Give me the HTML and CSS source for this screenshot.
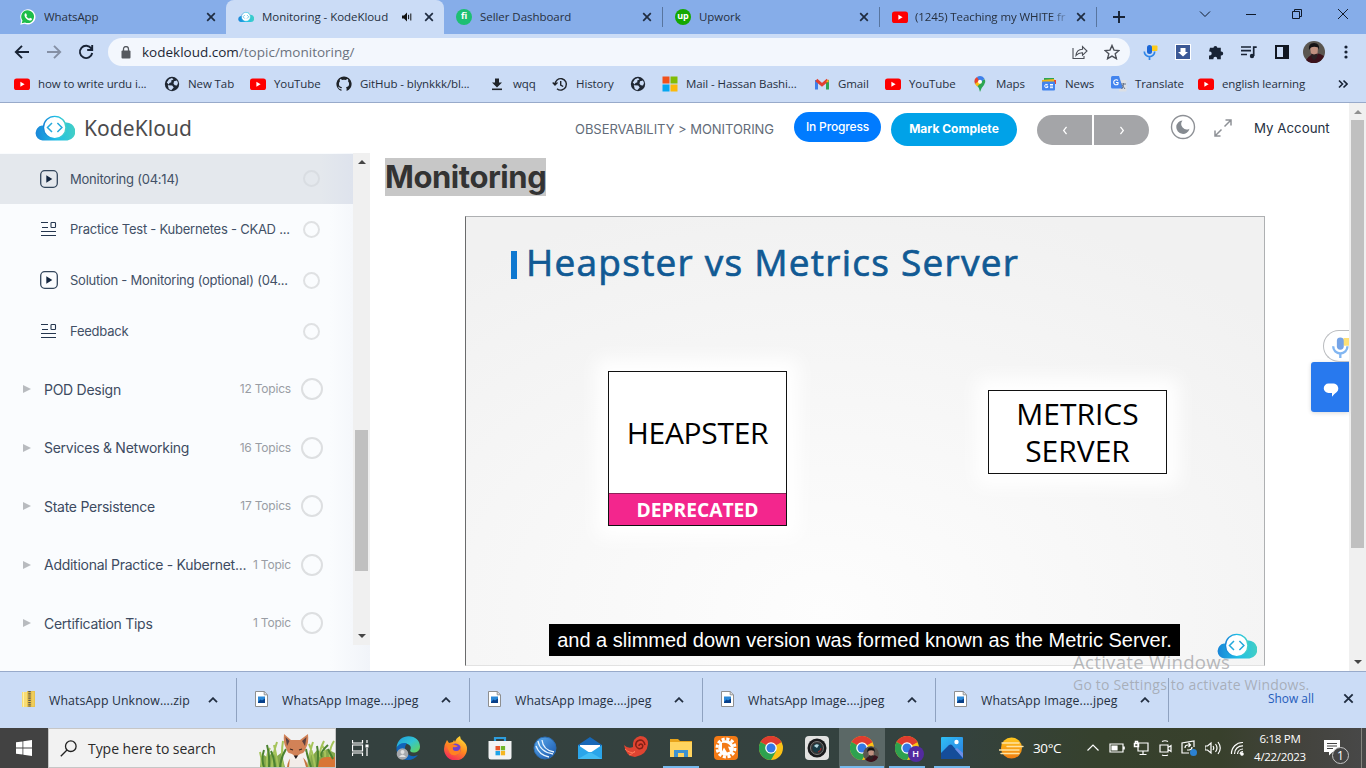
FILE: index.html
```html
<!DOCTYPE html>
<html lang="en">
<head>
<meta charset="utf-8">
<title>Monitoring - KodeKloud</title>
<link rel="stylesheet" href="styles.css">
</head>
<body>
<svg class="sprite" aria-hidden="true">
  <defs>
    <linearGradient id="cloudGrad" x1="0" y1="0" x2="1" y2="0"><stop offset="0" stop-color="#1a86d8"/><stop offset=".55" stop-color="#1fc0e6"/><stop offset="1" stop-color="#44cfc4"/></linearGradient>
    <linearGradient id="edgeGrad" x1="0" y1="0" x2="1" y2="1"><stop offset="0" stop-color="#1b9de2"/><stop offset=".5" stop-color="#33c4d0"/><stop offset="1" stop-color="#68d64b"/></linearGradient>
    <linearGradient id="foxGrad" x1=".8" y1="0" x2=".3" y2="1"><stop offset="0" stop-color="#ffe23a"/><stop offset=".5" stop-color="#ff8a1f"/><stop offset="1" stop-color="#f4265c"/></linearGradient>
    <linearGradient id="blueBall" x1="0" y1="0" x2="1" y2="1"><stop offset="0" stop-color="#5fb0f2"/><stop offset="1" stop-color="#1652a8"/></linearGradient>
    <linearGradient id="photoGrad" x1="0" y1="0" x2="1" y2="1"><stop offset="0" stop-color="#2fc0f5"/><stop offset="1" stop-color="#2a7be0"/></linearGradient>
    <linearGradient id="sunGrad" x1="0" y1="0" x2="0" y2="1"><stop offset="0" stop-color="#ffc81e"/><stop offset="1" stop-color="#f07d12"/></linearGradient>
  </defs>
  <symbol id="close" viewBox="0 0 10 10"><path d="M1.200 1.200l7.600 7.600M8.800 1.200L1.200 8.800" fill="none" stroke="#1f2c40" stroke-width="1.700"/></symbol>
  <symbol id="youtube" viewBox="0 0 16 16"><rect y="2.500" width="16" height="11.500" rx="2.600" fill="#fe0000"/><path d="M6.400 5.800v5l4.200-2.500z" fill="#fff"/></symbol>
  <symbol id="globe" viewBox="0 0 16 16"><circle cx="8" cy="8" r="7.200" fill="#1f2733"/><path d="M2.800 6.500L5 3.200l3-1.300 1.500 1.500-2.300 1.200.2 1.700-2 .6-.6 1.600zM10 5.300l3-.9 1 2.600-1 2.600-2.200-.4-1.300-1.500zM3.800 9.200l4.400.2 1.500 2-2.500 2.900-2.400-1.400z" fill="#cbdcf6"/></symbol>
  <symbol id="kcloud" viewBox="0 0 40 26"><path d="M7.500 25.500A7.500 7.500 0 0 1 7 10.600l3 .2A10.500 10.500 0 0 1 30 7.500a9 9 0 0 1 2.500 18z" fill="url(#cloudGrad)"/><circle cx="19.700" cy="12.500" r="11.200" fill="#fff" stroke="url(#cloudGrad)" stroke-width="1.300"/><path d="M17 8l-4.500 4.500L17 17M22.400 8l4.500 4.500-4.500 4.500" fill="none" stroke="#24a9dc" stroke-width="1.500"/></symbol>
  <symbol id="mic" viewBox="0 0 16 16"><rect x="9.500" y="1.500" width="6" height="5.500" rx="1" fill="#fdcb1c"/><rect x="5" y="1" width="5" height="9" rx="2.500" fill="#1a66d6"/><path d="M2.300 7.500a5.200 5.200 0 0 0 10.400 0M7.500 12.700V16" fill="none" stroke="#2f86e8" stroke-width="1.700"/></symbol>
  <symbol id="avatar" viewBox="0 0 22 22"><circle cx="11" cy="11" r="11" fill="#5a5650"/><path d="M3 19q8-11 18-4a11 11 0 0 1-18 4z" fill="#3c121c"/><path d="M7 6q4-3 8 0l-.5 7-3.300 4L8 13z" fill="#c09180"/><path d="M6 9Q5 2 11 2t5 7l-1-2.500q-4-1.500-7 0z" fill="#151315"/><path d="M8 12.500l3 1 3.500-1-.5 4-3 3-2.500-3z" fill="#2b2224"/></symbol>
  <symbol id="file-img" viewBox="0 0 13 16"><path d="M.5.500h8.700l3.300 3.300v11.700H.500z" fill="#fff" stroke="#8e8f90"/><path d="M9.200.500v3.300h3.300" fill="none" stroke="#8e8f90"/><rect x="3" y="5.500" width="7" height="6.500" fill="#2a88d8"/><path d="M3 11l2.500-2.500 1.500 1 3-2V12H3z" fill="#093f88"/></symbol>
  <symbol id="caret" viewBox="0 0 10 6"><path d="M1 5.200l4-4 4 4" fill="none" stroke="#222e40" stroke-width="1.800"/></symbol>
  <symbol id="play" viewBox="0 0 18 18"><rect x=".7" y=".7" width="16.600" height="16.600" rx="4" fill="none" stroke="#33465c" stroke-width="1.300"/><path d="M6.300 5.200v7.600l6-3.800z" fill="#13263f"/></symbol>
  <symbol id="quiz" viewBox="0 0 16 16"><path d="M0 1.500h7M1 6.500h6M0 10.500h15M0 14.500h15" stroke="#24364e" stroke-width="1.100"/><rect x="10" y="1.500" width="4.500" height="5" rx=".8" fill="none" stroke="#24364e" stroke-width="1.100"/></symbol>
  <symbol id="chrome" viewBox="0 0 24 24"><circle cx="12" cy="12" r="12" fill="#fbc116"/><path d="M12 12L1.600 6A12 12 0 0 1 22.400 6z" fill="#df3c2f"/><path d="M12 12L1.600 6A12 12 0 0 0 12 24l5.200-9z" fill="#2ea14f"/><path d="M12 6h10.400L12 12z" fill="#df3c2f"/><circle cx="12" cy="12" r="5.800" fill="#fff"/><circle cx="12" cy="12" r="4.500" fill="#3478e5"/></symbol>
</svg>

<div class="tabs">
  <div class="tab tab-first"><svg class="fav" viewBox="0 0 16 16"><path d="M.3 15.700l1-4A7.600 7.600 0 1 1 4.500 14.700z" fill="#fff"/><path d="M1.700 14.300l.8-2.800A6.400 6.400 0 1 1 5 13.500z" fill="#1ebd49"/><path d="M5 4.600l1-.3 1 2-.7 1q1 1.700 2.800 2.400l.9-1 2 1-.3 1.200q-1 1-2.300.6Q5.300 10 4.500 6.500q0-1.200.5-1.900z" fill="#fff"/></svg><span class="label">WhatsApp</span><svg class="x"><use href="#close"/></svg></div>
  <div class="tab active"><svg class="fav"><use href="#kcloud"/></svg><span class="label">Monitoring - KodeKloud</span><svg class="audio" viewBox="0 0 10 10"><path d="M0 3.500h2L5 .5v9l-3-3H0z" fill="#111"/><path d="M6.600 2.800v4.400M8.800 1.500v7" stroke="#111" stroke-width="1"/></svg><svg class="x"><use href="#close"/></svg></div>
  <div class="tab sep"><span class="fav badge fiverr">fi</span><span class="label">Seller Dashboard</span><svg class="x"><use href="#close"/></svg></div>
  <div class="tab sep"><span class="fav badge upwork">up</span><span class="label">Upwork</span><svg class="x"><use href="#close"/></svg></div>
  <div class="tab sep"><svg class="fav"><use href="#youtube"/></svg><span class="label fade">(1245) Teaching my WHITE fr</span><svg class="x"><use href="#close"/></svg></div>
  <svg class="plus" viewBox="0 0 12 12"><path d="M6 0v12M0 6h12" stroke="#182335" stroke-width="1.900"/></svg>
  <div class="winctl">
    <svg viewBox="0 0 12 12"><path d="M1 3.500l5 5 5-5" /></svg>
    <svg viewBox="0 0 12 12"><path d="M1 6.500h10"/></svg>
    <svg viewBox="0 0 12 12"><path d="M1.500 3.500h7v7h-7zM3.500 3.500v-2h7v7h-2"/></svg>
    <svg viewBox="0 0 12 12"><path d="M1 1l10 10M11 1L1 11"/></svg>
  </div>
</div>

<div class="toolbar">
  <svg class="nav" viewBox="0 0 16 16"><path d="M15 8H2M8 1.800L1.800 8 8 14.200" stroke="#182335"/></svg>
  <svg class="nav" viewBox="0 0 16 16"><path d="M1 8h13M8 1.800L14.200 8 8 14.200" stroke="#8590a5"/></svg>
  <svg class="nav" viewBox="0 0 16 16"><path d="M13.300 4.500A6.200 6.200 0 1 0 14.200 9M14.200 1v5h-5" stroke="#182335"/></svg>
  <div class="omnibox">
    <svg class="lock" viewBox="0 0 10 13"><rect x=".5" y="4.500" width="9" height="8" rx="1" fill="#55595f"/><path d="M2.500 5V3a2.500 2.500 0 0 1 5 0v2" fill="none" stroke="#55595f" stroke-width="1.300"/></svg>
    <span class="url">kodekloud.com<i>/topic/monitoring/</i></span>
    <svg class="oi" viewBox="0 0 16 16"><path d="M1 4v10.500h11V12M4 11.500q.5-6 6.500-6.300V2.500L15 7l-4.500 4.300V8.700Q6.500 8.500 4 11.500z" fill="none" stroke="#4c5058" stroke-width="1.100"/></svg>
    <svg class="oi" viewBox="0 0 16 16"><path d="M8 1.500l2 4.600 5 .4-3.800 3.300 1.200 4.900L8 12.100l-4.400 2.600 1.200-4.900L1 6.500l5-.4z" fill="none" stroke="#4c5058" stroke-width="1.400"/></svg>
  </div>
  <div class="exts">
    <svg><use href="#mic"/></svg>
    <svg viewBox="0 0 16 16"><rect x=".5" y=".5" width="15" height="15" fill="#3b5895" stroke="#fff"/><path d="M5.500 4h5v4H13l-5 4.500L3 8h2.500z" fill="#fff"/></svg>
    <svg viewBox="0 0 16 16"><path d="M2 3.800h3.500a1.900 1.900 0 1 1 3.800 0h3.500v3.800h.5a1.900 1.900 0 0 1 0 3.800h-.5v3.800H9.200v-.5a1.900 1.900 0 0 0-3.800 0v.5H1v-3.800h.8a1.900 1.900 0 0 0 0-3.800H1z" fill="#182335"/></svg>
    <svg viewBox="0 0 16 16"><path d="M0 3h10M0 6.700h10M0 10.500h6M12.700 12V3.200h3" fill="none" stroke="#182335" stroke-width="1.700"/><circle cx="11" cy="12" r="2.200" fill="#182335"/></svg>
    <svg viewBox="0 0 16 16"><path d="M2 2h12v12H2z" fill="none" stroke="#111722" stroke-width="2"/><path d="M9 2h5v12H9z" fill="#111722"/></svg>
    <svg class="me"><use href="#avatar"/></svg>
    <svg viewBox="0 0 16 16"><g fill="#182335"><circle cx="8" cy="3" r="1.600"/><circle cx="8" cy="8" r="1.600"/><circle cx="8" cy="13" r="1.600"/></g></svg>
  </div>
</div>

<div class="bookmarks">
  <span><svg><use href="#youtube"/></svg>how to write urdu i...</span>
  <span><svg><use href="#globe"/></svg>New Tab</span>
  <span><svg><use href="#youtube"/></svg>YouTube</span>
  <span><svg viewBox="0 0 16 16"><path d="M8 .6a7.400 7.400 0 0 0-2.600 14.400v-1.800q-2 .3-2.800-1.500l-.8-.9q1.200-.2 2 1 .6.700 1.700.4l.5-1Q2.900 10.800 2.900 8q0-1.700 1-2.600-.3-1.200.2-2.300 1 0 2.200.9 1.700-.4 3.400 0 1.200-.9 2.200-.9.500 1.100.2 2.300 1 .9 1 2.600 0 2.800-3.100 3.200.6.700.6 1.600V15A7.400 7.400 0 0 0 8 .6z" fill="#1f2328"/></svg>GitHub - blynkkk/bl...</span>
  <span><svg viewBox="0 0 16 16"><path d="M6 2.500h4v4h3l-5 5-5-5h3z" fill="#20242a"/><path d="M3 13.300h10" stroke="#20242a" stroke-width="1.600"/></svg>wqq</span>
  <span><svg viewBox="0 0 16 16"><path d="M3 8.500a5.700 5.700 0 1 1 2 4.200M.7 6.500L3 9l2.500-2.500M8.700 5v4l2.500 1.500" fill="none" stroke="#20242a" stroke-width="1.400"/></svg>History</span>
  <span><svg><use href="#globe"/></svg></span>
  <span><svg viewBox="0 0 16 16"><path d="M.5.500h7v7h-7z" fill="#f1511b"/><path d="M8.500.500h7v7h-7z" fill="#80bc06"/><path d="M.5 8.500h7v7h-7z" fill="#05a6f0"/><path d="M8.500 8.500h7v7h-7z" fill="#fbb90a"/></svg>Mail - Hassan Bashi...</span>
  <span><svg viewBox="0 0 16 16"><path d="M2.500 13.500V4" stroke="#3f7fe8" stroke-width="3"/><path d="M13.500 13.500V4" stroke="#2fa551" stroke-width="3"/><path d="M2.300 4L8 8.800 13.700 4" fill="none" stroke="#e2402f" stroke-width="3"/><path d="M12 5.400l2.500-2.200v3.300z" fill="#f8bb15"/></svg>Gmail</span>
  <span><svg><use href="#youtube"/></svg>YouTube</span>
  <span><svg viewBox="0 0 16 16"><path d="M8 16Q7 11 4 8.600 2 6 3 3.500h10q1 2.500-1 5.500Q9 12 8 16z" fill="#2ca552"/><path d="M3 8Q1.300 3 5 1l4 3z" fill="#e8422f"/><path d="M5 1q4-2.500 7.500 1.500L8.500 7z" fill="#3e80ea"/><path d="M3 8l3.500-3 2.500 2-3.800 3.500z" fill="#fbbc14"/><circle cx="8" cy="5.700" r="2" fill="#fff"/></svg>Maps</span>
  <span><svg viewBox="0 0 16 16"><path d="M3 2h10v5H3z" fill="#2da552"/><path d="M1 4l12-1 2 4H1z" fill="#f3b51a"/><path d="M13 4h2v4h-2z" fill="#e44735"/><rect x="1" y="5.500" width="13" height="9" rx="1" fill="#4384ee"/><path d="M6.700 8.500q-3-1-3 1.500t3 1.500V10H5.300M9 8.500h3M9 10h3M9 11.700h3" fill="none" stroke="#fff"/></svg>News</span>
  <span><svg viewBox="0 0 16 16"><path d="M7 4h7.500q1 0 1 1v9.500q0 1-1 1H8z" fill="#dcdfe4"/><path d="M1.500 0H8l4 12.500H1.500Q0 12.500 0 11V1.500Q0 0 1.500 0z" fill="#4384ee"/><path d="M7 4.500A2.500 2.500 0 1 0 7 8V6.500H5" fill="none" stroke="#fff" stroke-width="1.100"/><path d="M10 8h5M12.500 7v1q0 3-2 5M11 9l3 4" fill="none" stroke="#65758c"/></svg>Translate</span>
  <span><svg><use href="#youtube"/></svg>english learning</span>
  <svg class="more" viewBox="0 0 10 10"><path d="M1 1.500L4.500 5 1 8.500M5.500 1.500L9 5 5.500 8.500" fill="none" stroke="#182335" stroke-width="1.600"/></svg>
</div>

<div class="page">
  <div class="site">
    <header class="head">
      <svg class="logo"><use href="#kcloud"/></svg><span class="brand">KodeKloud</span>
      <span class="crumb">OBSERVABILITY &gt; MONITORING</span>
      <span class="pill progress">In Progress</span>
      <span class="pill complete">Mark Complete</span>
      <span class="pager left"><svg viewBox="0 0 6 10"><path d="M4.700 1L1.500 5l3.200 4"/></svg></span>
      <span class="pager right"><svg viewBox="0 0 6 10"><path d="M1.300 1l3.200 4-3.200 4"/></svg></span>
      <svg class="moon" viewBox="0 0 26 26"><circle cx="13" cy="13" r="11.500" fill="none" stroke="#8e9196" stroke-width="1.400"/><path d="M12.500 6.500a6.700 6.700 0 1 0 7 8.200 5.500 5.500 0 0 1-7-8.200z" fill="#858a90"/></svg>
      <svg class="expand" viewBox="0 0 18 18"><path d="M11.500 1H17v5.500M17 1l-6.500 6.500M6.500 17H1v-5.500M1 17l6.500-6.500" fill="none" stroke="#8e9196" stroke-width="1.500"/></svg>
      <span class="account">My Account</span>
    </header>
    <div class="body">
      <aside class="side">
        <div class="list">
          <div class="topic current"><svg><use href="#play"/></svg><span>Monitoring (04:14)</span><b></b></div>
          <div class="topic"><svg class="q"><use href="#quiz"/></svg><span>Practice Test - Kubernetes - CKAD ...</span><b></b></div>
          <div class="topic"><svg><use href="#play"/></svg><span>Solution - Monitoring (optional) (04...</span><b></b></div>
          <div class="topic"><svg class="q"><use href="#quiz"/></svg><span>Feedback</span><b></b></div>
          <div class="lessons">
            <div class="lesson"><i></i><span>POD Design</span><em>12 Topics</em><b></b></div>
            <div class="lesson"><i></i><span>Services &amp; Networking</span><em>16 Topics</em><b></b></div>
            <div class="lesson"><i></i><span>State Persistence</span><em>17 Topics</em><b></b></div>
            <div class="lesson"><i></i><span>Additional Practice - Kubernet...</span><em>1 Topic</em><b></b></div>
            <div class="lesson"><i></i><span>Certification Tips</span><em>1 Topic</em><b></b></div>
          </div>
        </div>
        <div class="sbar"><i class="up"></i><div class="thumb"></div><i class="down"></i></div>
      </aside>
      <main>
        <h1><span>Monitoring</span></h1>
        <div class="slide">
          <div class="title"><i></i><span>Heapster vs Metrics Server</span></div>
          <div class="node heapster"><span class="name">HEAPSTER</span><span class="dep">DEPRECATED</span></div>
          <div class="node metrics"><span>METRICS</span><span>SERVER</span></div>
          <div class="caption"><span>and a slimmed down version was formed known as the Metric Server.</span></div>
          <svg class="slidelogo"><use href="#kcloud"/></svg>
        </div>
      </main>
    </div>
    <div class="micpop"><svg><use href="#mic"/></svg></div>
    <div class="chat"><svg viewBox="0 0 16 14"><path d="M5.500.500h5A5 5 0 0 1 13.800 9Q11 11 9 13.700V10H5.500a4.700 4.700 0 0 1 0-9.500z" fill="#fff"/></svg></div>
  </div>
  <div class="pbar"><i class="up"></i><div class="thumb"></div><i class="down"></i></div>
</div>

<div class="downloads">
  <div class="dl"><svg class="fi" viewBox="0 0 13 16"><path d="M0 1h5v15H0z" fill="#f7dc75"/><path d="M5 0h8v16H5z" fill="#e9c34d"/><path d="M1.500 1v15" stroke="#fff0a5" stroke-width="1"/><path d="M7.500 0v16" stroke="#56534b" stroke-width="2.500" stroke-dasharray="1.200 1"/><path d="M11 1v14" stroke="#f5d66a"/></svg><span>WhatsApp Unknow....zip</span><svg class="car"><use href="#caret"/></svg></div>
  <div class="dl"><svg class="fi"><use href="#file-img"/></svg><span>WhatsApp Image....jpeg</span><svg class="car"><use href="#caret"/></svg></div>
  <div class="dl"><svg class="fi"><use href="#file-img"/></svg><span>WhatsApp Image....jpeg</span><svg class="car"><use href="#caret"/></svg></div>
  <div class="dl"><svg class="fi"><use href="#file-img"/></svg><span>WhatsApp Image....jpeg</span><svg class="car"><use href="#caret"/></svg></div>
  <div class="dl"><svg class="fi"><use href="#file-img"/></svg><span>WhatsApp Image....jpeg</span><svg class="car"><use href="#caret"/></svg></div>
  <span class="showall">Show all</span>
  <svg class="dx"><use href="#close"/></svg>
</div>

<div class="taskbar">
  <div class="start"><svg viewBox="0 0 16 16"><path d="M0 2.300l6.500-.9v6.200H0zM7.300 1.300L16 0v7.600H7.300zM0 8.400h6.500v6.200L0 13.700zM7.300 8.400H16V16l-8.700-1.300z" fill="#fff"/></svg></div>
  <div class="search">
    <svg class="mag" viewBox="0 0 17 17"><circle cx="10.800" cy="6.200" r="5.300" fill="none" stroke="#222" stroke-width="1.300"/><path d="M7 10L.8 16.200" stroke="#222" stroke-width="1.300"/></svg>
    <span>Type here to search</span>
    <svg class="fox" viewBox="0 0 76 34">
      <path d="M1 34l1-9 3-3 4 3 4-6 5 4 4-3 4 14zM48 34l2-14 4 2 4-5 5 3 5-4 8 4v14z" fill="#86a84c"/>
      <path d="M59 34q0-10 9-10h8v10z" fill="#d87535"/>
      <g fill="none" stroke-width="2"><path d="M3 34Q3 26 1 19M8 34Q7 22 11 15M13 34Q13 24 18 9M19 34Q17 20 15 12M24 34Q22 20 24 8M50 34Q50 20 54 9M56 34Q54 20 50 11M61 24Q60 18 65 8M66 24Q67 18 63 12M71 24Q70 16 75 8" stroke="#a5c45a"/><path d="M5 34Q2 26 5 17M10 34Q11 22 8 12M16 34Q15 24 12 18M21 34Q22 24 27 16M52 34Q48 22 47 16M58 34Q60 22 58 13M63 24Q60 20 69 12M74 26Q72 22 69 16" stroke="#4b8230"/></g>
      <path d="M28 34q1-8 6-11h8q6 4 7 11z" fill="#c7743f"/><path d="M30 34l1-10h13l3 10z" fill="#f2ece8"/>
      <path d="M25 1l7 6h9l8-6q1 9-2 14-2 6-9 11h-2q-7-4-9-11-3-5-2-14z" fill="#d28257"/><path d="M26.500 4l4 4-2.500 5zM47.500 4l-4.500 4 3 5z" fill="#5c4140"/><path d="M27 19l6 2 4 3 4-3 6-2q-2 5-8 8h-4q-6-3-8-8z" fill="#f7f0eb"/><path d="M34.700 22.500h4.400l-2.200 3.500z" fill="#221a1c"/><path d="M31 16l3 1M43 16l-3 1" stroke="#3a2520" stroke-width="1.300"/>
    </svg>
  </div>
  <div class="apps">
    <div class="app"><svg class="tv" viewBox="0 0 17 16"><path d="M.5 0v3h10V0M.5 5h10v6H.5zM.5 16v-3h10v3M15 0v3M15 8v8" fill="none" stroke="#fff" stroke-width="1.200"/><rect x="13.500" y="4.500" width="3" height="3" fill="#fff"/></svg></div>
    <div class="app"><svg viewBox="0 0 24 24"><path d="M.5 12C1 4 7 .3 12.500.3 19.500.3 24 5 24 10.500c0 4-3 6-6.500 6-3 0-4-1.500-3-3C16 10 12 7 8 8 3 9 1 11 .5 12z" fill="url(#edgeGrad)"/><path d="M.5 12C2 8 7 6 11 7.500 8 10 8 17 14 19.500q4 1.500 8-.5-4 5-10 5C5 24 0 18 .5 12z" fill="#1165ba"/><circle cx="6.500" cy="18" r="5.800" fill="#a6a9ad"/><circle cx="6.500" cy="16" r="2" fill="#e1e1e1"/><path d="M3 21q3.500-5 7 0z" fill="#e1e1e1"/></svg></div>
    <div class="app"><svg viewBox="0 0 24 24"><path d="M4 4l2 3 4-1 1-2 1 2Q13 2 17 0q0 3 3 5 4 3 4 8a11.500 11.500 0 1 1-23 0q0-4 3-9z" fill="url(#foxGrad)"/><circle cx="12.500" cy="13" r="5.500" fill="#7041cf"/><path d="M4 9q4-2 8 0l3 1q-2 2-5 1-1 4 3 4 5 0 4-6 3 8-4 10Q6 21 4 9z" fill="#ff8122"/></svg></div>
    <div class="app"><svg viewBox="0 0 24 24"><path d="M7 6V2h10v4" fill="none" stroke="#2d9ddd" stroke-width="2.200"/><path d="M.5 5h23v16q0 2.500-2.500 2.500H3Q.5 23.500.5 21z" fill="#f2f3f4"/><path d="M7.500 10H12v4.300H7.500z" fill="#e7552a"/><path d="M12.800 10h4.300v4.300h-4.300z" fill="#70b52a"/><path d="M7.500 15H12v4.300H7.500z" fill="#20a4e8"/><path d="M12.800 15h4.300v4.300h-4.300z" fill="#f6b621"/></svg></div>
    <div class="app"><svg viewBox="0 0 24 24"><circle cx="12" cy="12" r="11" fill="url(#blueBall)" stroke="#2b6bb0"/><path d="M5 5q2 11 15 13M9 4q1 10 12 12M3 10q3 9 13 11" fill="none" stroke="#e7f4ff" stroke-width="1.300"/></svg></div>
    <div class="app"><svg viewBox="0 0 24 24"><path d="M0 9l12-8 12 8v14H0z" fill="#1768b7"/><path d="M2 9h20v7H2z" fill="#fff"/><path d="M0 9l12 8L24 9v14H0z" fill="#2aa5ea"/><path d="M0 23l12-7 12 7z" fill="#42bcf4"/></svg></div>
    <div class="app"><svg viewBox="0 0 24 24"><path d="M0 9q4 4 9 2-1-9 7-11 8 0 8 8-1 11-13 13Q2 21 0 9z" fill="#df4431"/><path d="M21 9q-1-5-5-5-5 1-4 6 2 4 6 2 2-3-1-4-2 0-2 2" fill="none" stroke="#832016" stroke-width="1.500"/><path d="M1 13q5 5 10 3M5 19q4-1 6-4" fill="none" stroke="#ff7556"/></svg></div>
    <div class="app open files"><svg viewBox="0 0 24 24"><path d="M1 3h8l2 2h12v16H1z" fill="#e8a41b"/><path d="M1 6h22v15H1z" fill="#ffd45f"/><path d="M5 21v-7h14v7h-4v-4H9v4z" fill="#3e93d1"/></svg></div>
    <div class="app"><svg viewBox="0 0 24 24"><rect width="24" height="24" rx="4" fill="#f47a15"/><circle cx="12" cy="12" r="9" fill="none" stroke="#fff" stroke-width="3" stroke-dasharray="3.100 1.612"/><circle cx="12" cy="12" r="7.800" fill="#fff"/><path d="M8 7q6-1 9 4l-3-.5 2 5-3 1-3-5-2 4z" fill="#f47a15"/></svg></div>
    <div class="app"><svg><use href="#chrome"/></svg></div>
    <div class="app"><svg viewBox="0 0 24 24"><rect width="24" height="24" rx="4" fill="#e2e2e1"/><circle cx="12" cy="12" r="9.500" fill="#191a1c"/><circle cx="12" cy="12" r="6.500" fill="#333" stroke="#777"/><circle cx="12" cy="12" r="4.500" fill="#163a45"/><path d="M9 10q2-3 5-1l-2 3z" fill="#b3d7e0"/><path d="M13 16q3-1 3-4" stroke="#b22" fill="none"/></svg></div>
    <div class="app open lit"><svg><use href="#chrome"/></svg><svg class="sub"><use href="#avatar"/></svg></div>
    <div class="app open"><svg><use href="#chrome"/></svg><span class="sub h">H</span></div>
    <div class="app open"><svg viewBox="0 0 24 24"><rect x="1" y="1" width="22" height="22" rx="1" fill="url(#photoGrad)"/><path d="M1 17L9 9q2-1 3 0l11 13v1H1z" fill="#154d9a"/><path d="M15 13l2-1 6 5v5z" fill="#6d8ee5"/><circle cx="16.500" cy="6" r="2.200" fill="#fff"/></svg></div>
  </div>
  <svg class="weather" viewBox="0 0 26 22"><circle cx="12.500" cy="11" r="10.500" fill="url(#sunGrad)"/><path d="M3 6h17M8 9.500h16M0 13h20M2 16.500h18" stroke="#ffe3a1" stroke-width="1.400" stroke-linecap="round"/></svg>
  <span class="temp">30°C</span>
  <div class="tray">
    <svg viewBox="0 0 16 16"><path d="M2.500 10.500L8 5l5.500 5.500"/></svg>
    <svg viewBox="0 0 16 16"><path d="M1 4h13v8H1zM15.200 6.500v3"/><path d="M3 6h5v4H3z" fill="#fff"/></svg>
    <svg viewBox="0 0 16 16"><path d="M5 3h10v8H5zM10 11v3M6.500 14.500h7"/><path d="M1.500 3.500h4v3h-4zM2.500 3V1.500h2V3" stroke-width="1.500"/></svg>
    <svg viewBox="0 0 16 16"><path d="M3 5h8v7H3zM11 7.500l3-2v6l-3-2M5 1.500q3-1.500 6 0M5 15q3 1.300 6 0"/></svg>
    <svg viewBox="0 0 16 16"><path d="M13 7V1L1 3v10h7M4 8q0-3 3-3h2M7.500 3l2 2-2 2M11 7q0 3-3 3H6"/><circle cx="12.500" cy="12.500" r="3.500" fill="#2b82d3" stroke="none"/></svg>
    <svg viewBox="0 0 16 16"><path d="M0 6v4h2.500L6 13V3L2.500 6zM8 6q1.500 2 0 4M10.500 4q3 4 0 8M13 2q4.500 6 0 12"/></svg>
    <svg viewBox="0 0 16 16"><path d="M2.500 14A11 11 0 0 1 14 2.500M5.500 14A8 8 0 0 1 14 5.800M8.500 14A5.500 5.500 0 0 1 14 9M11 14a3 3 0 0 1 3-2.500"/><circle cx="13" cy="14" r="1.200" fill="#fff"/></svg>
  </div>
  <div class="clock"><span>6:18 PM</span><span>4/22/2023</span></div>
  <div class="notif"><svg viewBox="0 0 17 16"><path d="M0 0h16v12H8.500L5 15.500V12H0z" fill="#fff"/><path d="M3 3.500h10M3 6h10M3 8.500h6" stroke="#454545"/></svg><span>1</span></div>
</div>
<div class="mark"><span class="m1">Activate Windows</span><span class="m2">Go to Settings to activate Windows.</span></div>
</body>
</html>
```
FILE: styles.css
```css
* { box-sizing: border-box; }
body { margin: 0; width: 1366px; height: 768px; overflow: hidden; display: flex; flex-direction: column; position: relative; background: #fff; font-family: "Open Sans", "Noto Sans", sans-serif; font-size: 11.5px; color: #26303f; white-space: nowrap; }
svg { display: block; flex: none; }
i, em { font-style: normal; }
.sprite { position: absolute; width: 0; height: 0; }

/* tab strip */
.tabs { height: 34px; flex: none; background: #86ade9; display: flex; align-items: stretch; }
.tab { width: 217px; padding: 0 11px 0 12px; display: flex; align-items: center; }
.tab-first { width: 226px; padding-left: 20px; padding-right: 10px; }
.tab.active { width: 218px; background: #cbdcf6; border-radius: 8px 8px 0 0; padding-right: 10px; }
.tab.active + .tab { width: 219px; }
.sep { background: linear-gradient(#58759f, #58759f) right 0 center / 1px 20px no-repeat; }
.fav { width: 16px; height: 16px; margin-right: 8px; flex: none; }
.badge { border-radius: 50%; color: #fff; font-weight: 700; font-size: 9px; line-height: 14px; text-align: center; }
.fiverr { background: #1dbf73; }
.upwork { background: #14a800; }
.label { flex: 1; overflow: hidden; margin-top: -2px; letter-spacing: -.05px; }
.fade { margin-left: -1px; -webkit-mask-image: linear-gradient(90deg, #000 135px, transparent 156px); mask-image: linear-gradient(90deg, #000 135px, transparent 156px); letter-spacing: -.1px; }
.x { width: 10px; height: 10px; }
.audio { width: 10px; height: 10px; margin-right: 12px; }
.plus { width: 12px; height: 12px; margin: 11px 0 0 16px; }
.winctl { margin-left: auto; display: flex; gap: 34px; padding: 8px 17px 0 0; }
.winctl svg { width: 12px; height: 12px; fill: none; stroke: #101a2a; stroke-width: 1; }

/* toolbar */
.toolbar { height: 34px; flex: none; background: #cbdcf6; display: flex; align-items: center; padding: 2px 0 0 14px; }
.nav { width: 16px; height: 16px; margin-right: 16px; fill: none; stroke-width: 1.9; }
.omnibox { width: 1022px; height: 28px; margin-left: -2px; border-radius: 14px; background: #f3f7fd; display: flex; align-items: center; padding: 0 10px 0 13px; }
.lock { width: 10px; height: 13px; }
.url { flex: 1; margin-left: 11px; font-size: 13.5px; color: #1d2735; letter-spacing: 0; }
.url i { color: #6b727d; }
.oi { width: 16px; height: 16px; margin-left: 16px; }
.exts { display: flex; align-items: center; gap: 17px; margin-left: 12px; }
.exts svg { width: 16px; height: 16px; }
.exts .me { width: 22px; height: 22px; margin: 0 -4px; }

/* bookmarks */
.bookmarks { height: 35px; flex: none; background: #cbdcf6; border-bottom: 1px solid #98aaca; display: grid; grid-template-columns: 150px 86px 86px 153px 63px 78px 32px 152px 71px 87px 69px 70px 87px 140px 10px; align-items: center; padding: 0 0 3px 14px; }
.bookmarks span { display: flex; align-items: center; gap: 8px; letter-spacing: -.1px; }
.bookmarks svg { width: 16px; height: 16px; }
.bookmarks .more { width: 10px; height: 10px; }

/* page */
.page { height: 568px; flex: none; display: flex; }
.site { width: 1349px; position: relative; display: flex; flex-direction: column; font-family: Inter, sans-serif; }
.head { height: 50px; flex: none; display: flex; align-items: center; padding-left: 35px; }
.logo { width: 40px; height: 26px; }
.brand { font-family: "Noto Sans", sans-serif; font-size: 21px; color: #4b4b4d; margin-left: 9px; width: 491px; letter-spacing: .05px; line-height: 26px; }
.crumb { font-size: 13px; color: #626b78; width: 219px; padding-top: 2px; letter-spacing: -.05px; }
.pill { color: #fff; font-size: 12px; text-align: center; border-radius: 17px; flex: none; }
.progress { width: 87px; height: 30px; line-height: 30px; background: #007bff; margin-top: -2px; font-weight: 500; letter-spacing: -.15px; }
.complete { width: 126px; height: 33px; line-height: 32px; background: #00a2e8; margin: 3px 20px 0 10px; font-weight: 700; }
.pager { width: 55px; height: 30px; background: #a4a5a8; display: flex; align-items: center; justify-content: center; margin-top: 4px; }
.pager svg { width: 6px; height: 9px; fill: none; stroke: #fff; stroke-width: 1.4; }
.pager.left { border-radius: 15px 0 0 15px; margin-right: 2px; }
.pager.right { border-radius: 0 15px 15px 0; }
.moon { width: 26px; height: 26px; margin: -2px 0 0 21px; }
.expand { width: 18px; height: 18px; margin: -1px 22px 0 18px; }
.account { font-size: 13.3px; color: #263142; }
.body { flex: 1; display: flex; }
.side { width: 370px; display: flex; align-items: flex-start; background: linear-gradient(90deg, #fafcfe 330px, #f1f4f9); }
.list { width: 353px; padding-top: 1px; }
.topic { height: 51px; display: flex; align-items: center; padding: 0 33px 0 40px; font-size: 13px; color: #425066; }
.topic.current { height: 50px; background: linear-gradient(90deg, #e4e8ed 320px, #dee3ed); }
.topic svg { width: 18px; height: 18px; margin: -1px 12px 0 0; }
.topic .q { width: 16px; height: 16px; margin: -1px 13px 0 1px; }
.topic span { flex: 1; letter-spacing: -.24px; margin-top: -1px; }
.topic b { width: 17px; height: 17px; border: 2px solid #dfe1e3; border-radius: 50%; flex: none; margin-top: -1px; }
.topic.current b { border-color: #d9dde2; }
.lessons { padding-top: 3px; }
.lesson { height: 58.5px; display: flex; align-items: center; padding: 0 30px 0 23px; font-size: 14px; color: #3d4b61; }
.lesson i { border-left: 8px solid #b8bbbf; border-top: 4px solid transparent; border-bottom: 4px solid transparent; margin-right: 13px; }
.lesson span { flex: 1; letter-spacing: -.27px; }
.lesson em { font-size: 12px; color: #999da4; margin: -1px 10px 0 0; letter-spacing: -.2px; }
.lesson b { width: 22px; height: 22px; border: 2px solid #dddfe1; border-radius: 50%; flex: none; }
.sbar { width: 17px; height: 492px; background: #f0f0f0; display: flex; flex-direction: column; align-items: center; padding: 7px 0; }
.sbar .thumb { width: 13px; height: 141px; background: #c0c0c0; margin-top: 266px; }
.up, .down { width: 0; height: 0; border: 4px solid transparent; border-top-width: 0; border-bottom-color: #454545; }
.down { margin-top: auto; border-top: 4px solid #454545; border-bottom: 0; }
.pbar { width: 17px; background: #f0f0f0; display: flex; flex-direction: column; align-items: center; padding: 7px 0; }
.pbar .up { border-bottom-color: #909090; }
.pbar .thumb { width: 13px; height: 428px; background: #c0c0c0; margin-top: 6px; }

main { padding: 5px 0 0 15px; }
h1 { margin: 0 0 20px; font-size: 31px; font-weight: 700; line-height: 38px; color: #333; font-family: Inter, sans-serif; letter-spacing: -.45px; }
h1 span { display: inline-block; background: #c7c7c7; height: 38px; width: 161px; }
.slide { position: relative; width: 800px; height: 450px; margin-left: 80px; border: 1px solid #aeb0b2; border-left-color: #6a6b6c; border-bottom-color: #e2e2e2; background: radial-gradient(ellipse 620px 420px at 45% 88%, #fdfdfd, #f1f1f1); overflow: hidden; }
.title { display: flex; align-items: center; padding: 16px 0 0 45px; height: 73px; }
.title i { width: 6px; height: 28px; background: #0f78d0; margin: 6px 9px 0 0; }
.title span { font-family: "Open Sans", sans-serif; font-weight: 500; font-size: 37px; color: #115a94; letter-spacing: 1.25px; -webkit-text-stroke: .7px #115a94; }
.node { position: absolute; background: #fff; border: 1px solid #111; box-shadow: 0 0 18px 12px #fff; display: flex; flex-direction: column; align-items: center; font-size: 30px; color: #000; font-family: "Open Sans", sans-serif; }
.heapster { left: 142px; top: 154px; width: 179px; height: 155px; }
.name { height: 121px; flex: none; line-height: 122px; letter-spacing: -.3px; }
.dep { height: 32px; flex: none; width: 100%; text-align: center; background: #f3268d; border-top: 1px solid #8d2258; color: #fff; font-weight: 700; font-size: 19.2px; line-height: 31px; }
.metrics { left: 522px; top: 173px; width: 179px; height: 84px; line-height: 37px; padding-top: 4px; }
.caption { position: absolute; left: 83px; top: 407px; width: 631px; height: 32px; background: #000; color: #fff; font-family: "Liberation Sans", sans-serif; font-size: 20px; line-height: 32px; text-align: center; }
.slidelogo { position: absolute; left: 751px; top: 416px; width: 40px; height: 26px; }
.micpop { position: absolute; left: 1323px; top: 227px; width: 26px; height: 32px; border: 1px solid #bbbdc0; border-right: 0; border-radius: 16px 0 0 16px; overflow: hidden; }
.micpop svg { width: 22px; height: 22px; margin: 5px 0 0 6px; opacity: .6; }
.chat { position: absolute; left: 1311px; top: 259px; width: 38px; height: 50px; background: #2879ee; border-radius: 3px 0 0 3px; display: flex; align-items: center; justify-content: center; box-shadow: 0 1px 4px #d8d8d8; }
.chat svg { width: 16px; height: 14px; margin: 5px 0 0 2px; }

/* downloads shelf */
.downloads { height: 57px; flex: none; background: #cbdcf6; border-top: 1px solid #98aaca; display: flex; padding-left: 4px; font-size: 12.3px; }
.dl { width: 233px; display: flex; align-items: center; padding: 0 19px 0 18px; background: linear-gradient(#8fa2c0, #8fa2c0) right 6px / 1px 44px no-repeat; }
.dl .fi { width: 13px; height: 16px; margin: -3px 14px 0 0; }
.dl span { flex: 1; letter-spacing: .1px; }
.dl .car { width: 10px; height: 6px; }
.showall { color: #245bbb; margin-left: 99px; line-height: 53px; width: 75px; font-weight: 500; font-size: 11.9px; }
.dx { width: 11px; height: 11px; margin-top: 21px; }

/* taskbar */
.taskbar { height: 40px; flex: none; display: flex; background: linear-gradient(90deg, #34413f 336px, #34423f 950px, #36412d 1100px, #38402c 1220px, #43433d 1300px, #484848); color: #fff; }
.start { width: 48px; background: #424242; padding: 12px 16px; }
.start svg { width: 16px; height: 16px; }
.search { width: 288px; background: #f2f2f2; border: 1px solid #c6c6c6; display: flex; align-items: center; padding-left: 11px; color: #2b2b2b; font-size: 14px; }
.mag { width: 17px; height: 17px; margin-right: 11px; }
.search span { flex: 1; letter-spacing: -.05px; }
.fox { width: 76px; height: 34px; align-self: flex-end; }
.apps { display: grid; grid-template-columns: 48px 48px repeat(12, 45.25px); width: 639px; }
.app { position: relative; display: flex; align-items: center; justify-content: center; }
.app svg { width: 24px; height: 24px; }
.app .tv { width: 17px; height: 16px; }
.app.open { background: linear-gradient(#76b9ed, #76b9ed) center bottom / 36px 2px no-repeat; }
.app.lit { background: linear-gradient(#76b9ed, #76b9ed) center bottom / 44px 2px no-repeat, #5b6866; }
.app .sub { position: absolute; width: 16px; height: 16px; right: 6px; bottom: 6px; border-radius: 50%; }
.h { background: #532b9f; font-size: 9px; font-weight: 600; line-height: 16px; text-align: center; }
.weather { width: 26px; height: 22px; margin: 9px 8px 0 24px; }
.temp { font-size: 13.5px; line-height: 40px; width: 52px; letter-spacing: -.4px; }
.tray { display: flex; align-items: center; gap: 8px; }
.tray svg { width: 16px; height: 16px; fill: none; stroke: #fff; stroke-width: 1.2; }
.clock { display: flex; flex-direction: column; align-items: center; line-height: 18px; padding-top: 2px; width: 54px; margin-left: 8px; font-size: 11.5px; letter-spacing: -.3px; }
.notif { position: relative; flex: 1; padding: 12px 0 0 17px; background: linear-gradient(#85857f, #85857f) right 4px top / 1px 40px no-repeat; }
.notif svg { width: 17px; height: 16px; }
.notif span { position: absolute; left: 25px; top: 19px; width: 17px; height: 17px; border: 1px solid #c5c5c5; border-radius: 50%; background: #454545; font-size: 12px; line-height: 15px; text-align: center; }

/* activation watermark */
.mark { position: absolute; left: 1073px; top: 649px; display: flex; flex-direction: column; color: rgba(150, 152, 156, .68); }
.m1 { font-size: 18.6px; line-height: 26px; letter-spacing: .28px; }
.m2 { font-size: 14px; line-height: 20px; letter-spacing: .2px; }
```
